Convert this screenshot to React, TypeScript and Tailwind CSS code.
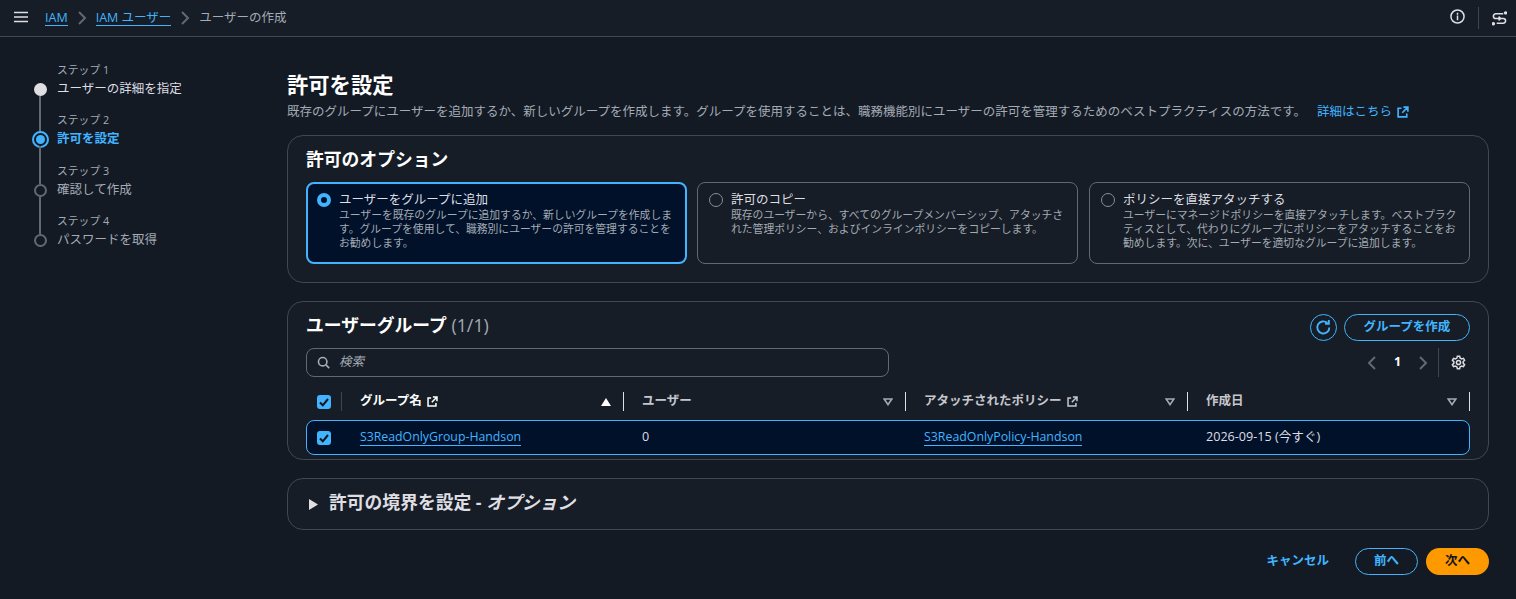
import { useState } from "react";

const font = { fontFamily: '"Open Sans", "Noto Sans CJK JP", sans-serif' };

const steps = [
    { label: "ステップ 1", title: "ユーザーの詳細を指定", state: "done" },
    { label: "ステップ 2", title: "許可を設定", state: "active" },
    { label: "ステップ 3", title: "確認して作成", state: "todo" },
    { label: "ステップ 4", title: "パスワードを取得", state: "todo" },
];

const options = [
    {
        title: "ユーザーをグループに追加",
        desc: "ユーザーを既存のグループに追加するか、新しいグループを作成します。グループを使用して、職務別にユーザーの許可を管理することをお勧めします。",
        selected: true,
    },
    {
        title: "許可のコピー",
        desc: "既存のユーザーから、すべてのグループメンバーシップ、アタッチされた管理ポリシー、およびインラインポリシーをコピーします。",
        selected: false,
    },
    {
        title: "ポリシーを直接アタッチする",
        desc: "ユーザーにマネージドポリシーを直接アタッチします。ベストプラクティスとして、代わりにグループにポリシーをアタッチすることをお勧めします。次に、ユーザーを適切なグループに追加します。",
        selected: false,
    },
];

const Chevron = ({ dir, className }: { dir: "left" | "right"; className: string }) => (
    <svg viewBox="3 1 10 14" className={className} fill="none" stroke="currentColor" strokeWidth="2">
        <path d={dir === "right" ? "M5 2l6 6-6 6" : "M11 2L5 8l6 6"} />
    </svg>
);

const ExternalIcon = ({ className }: { className: string }) => (
    <svg viewBox="0 0 16 16" className={className} fill="none" stroke="currentColor" strokeWidth="2.2">
        <path d="M8.500 1.500h6v6M14.500 1.500L7 9M6 3H1.500v11.500H13V10" />
    </svg>
);

const Check = () => (
    <span className="w-[14px] h-[14px] rounded-[3px] bg-[#42b4ff] flex items-center justify-center">
        <svg viewBox="0 0 14 14" className="w-[14px] h-[14px]" fill="none" stroke="#0f141a" strokeWidth="2">
            <path d="M3 7.500l2.800 2.800L11 4" />
        </svg>
    </span>
);

const SortIcon = ({ active }: { active?: boolean }) =>
    active ? (
        <svg viewBox="0 0 10 8" className="w-[10px] h-[8px] text-white" fill="currentColor">
            <path d="M5 0l5 8H0z" />
        </svg>
    ) : (
        <svg viewBox="0 0 10 8" className="w-[10px] h-[8px] text-[#a4abb5]" fill="none" stroke="currentColor" strokeWidth="1.6">
            <path d="M1.200 1h7.600L5 6.600z" />
        </svg>
    );

const ColDivider = () => <span className="w-px h-[19px] bg-[#dedee3]" />;

const Stepper = () => (
    <div className="w-[287px] shrink-0 pl-[32px] pt-[25px]">
        {steps.map((step, i) => (
            <div key={step.label} className="flex h-[50.3px] gap-[9px]">
                <div className="w-[16px] flex flex-col items-center">
                    <div className={`w-[2px] h-[21px] ${i === 0 ? "" : "bg-[#656871]"}`} />
                    {step.state === "done" && <div className="w-[13px] h-[13px] rounded-full bg-[#dedee3] shrink-0" />}
                    {step.state === "active" && (
                        <div className="w-[17px] h-[17px] -my-[2px] rounded-full border-2 border-[#42b4ff] shrink-0 flex items-center justify-center">
                            <div className="w-[9px] h-[9px] rounded-full bg-[#42b4ff]" />
                        </div>
                    )}
                    {step.state === "todo" && <div className="w-[13px] h-[13px] rounded-full border-2 border-[#656871] shrink-0" />}
                    {i < steps.length - 1 && <div className="w-[2px] flex-1 bg-[#656871]" />}
                </div>
                <div>
                    <p className="text-[10.8px] leading-[15px] text-[#a4abb5]">{step.label}</p>
                    <p
                        className={`text-[12.5px] leading-[20px] mt-[2px] ${
                            step.state === "active"
                                ? "font-bold text-[#42b4ff]"
                                : step.state === "done"
                                  ? "text-[#dedee3]"
                                  : "text-[#a4abb5]"
                        }`}
                    >
                        {step.title}
                    </p>
                </div>
            </div>
        ))}
    </div>
);

export default function App() {
    const [selected] = useState(true);

    return (
        <div className="w-[1516px] h-[599px] overflow-hidden bg-[#131a24] text-[#dedee3]" style={font}>
            <header className="h-[37px] bg-[#161d26] border-b border-[#424650] flex items-center pl-[14px] pr-[9px]">
                <svg viewBox="0 0 14 12" className="w-[14px] h-[12px] mb-[3px] text-[#dedee3]" fill="none" stroke="currentColor" strokeWidth="1.6">
                    <path d="M0 1.500h14M0 6h14M0 10.500h14" />
                </svg>
                <nav className="flex items-center ml-[17px] text-[12.5px]">
                    <a className="text-[#42b4ff] border-b border-[#42b4ff] leading-[15px]">IAM</a>
                    <Chevron dir="right" className="w-[10px] h-[14px] mx-[9px] text-[#656871]" />
                    <a className="text-[#42b4ff] border-b border-[#42b4ff] leading-[15px]">IAM ユーザー</a>
                    <Chevron dir="right" className="w-[10px] h-[14px] mx-[9px] text-[#656871]" />
                    <span className="text-[#a4abb5]">ユーザーの作成</span>
                </nav>
                <div className="ml-auto flex items-center">
                    <svg viewBox="0 0 16 16" className="w-[15px] h-[15px] mb-[3px] text-[#dedee3]" fill="none" stroke="currentColor" strokeWidth="1.6">
                        <circle cx="8" cy="8" r="7" />
                        <path d="M8 7v5M8 4v2" />
                    </svg>
                    <span className="w-px h-[22px] bg-[#424650] mx-[13px]" />
                    <svg viewBox="0 0 16 16" className="w-[15px] h-[15px] mt-[1px] text-[#dedee3]" fill="none" stroke="currentColor" strokeWidth="1.7">
                        <path d="M12 3H4a2.500 2.500 0 0 0 0 5h8a2.500 2.500 0 0 1 0 5H5" />
                        <path d="M7 6l2 2-2 2" />
                        <circle cx="14.500" cy="2" r="1" fill="currentColor" />
                        <circle cx="1.500" cy="13.500" r="1" fill="currentColor" />
                    </svg>
                </div>
            </header>

            <div className="flex">
                <Stepper />

                <main className="w-[1202px] shrink-0">
                    <h1 className="text-[21.3px] leading-[28px] font-bold text-white mt-[34px]">許可を設定</h1>
                    <p className="text-[12.5px] leading-[18px] text-[#a4abb5] mt-[4px] flex items-center">
                        既存のグループにユーザーを追加するか、新しいグループを作成します。グループを使用することは、職務機能別にユーザーの許可を管理するためのベストプラクティスの方法です。
                        <a className="text-[#42b4ff] ml-[11px] flex items-center gap-[5px]">
                            詳細はこちら
                            <ExternalIcon className="w-[12px] h-[12px]" />
                        </a>
                    </p>

                    <section className="mt-[14px] h-[148px] rounded-[16px] border border-[#424650] bg-[#161d26] px-[18px] pt-[11px]">
                        <h2 className="text-[17.8px] leading-[24px] font-bold text-white">許可のオプション</h2>
                        <div className="grid grid-cols-[391px_392px_381px] mt-[11px]">
                            {options.map((opt) => (
                                <div
                                    key={opt.title}
                                    className={`w-[381px] h-[82px] rounded-[8px] flex gap-[8px] ${
                                        opt.selected && selected
                                            ? "border-2 border-[#42b4ff] bg-[#001129] px-[9px] pt-[8px]"
                                            : "border border-[#656871] px-[11px] pt-[9px]"
                                    }`}
                                >
                                    {opt.selected ? (
                                        <span className="w-[14px] h-[14px] mt-[1px] rounded-full border-[4px] border-[#42b4ff] bg-[#001129] shrink-0" />
                                    ) : (
                                        <span className="w-[14px] h-[14px] mt-[1px] rounded-full border border-[#8c8c94] shrink-0" />
                                    )}
                                    <div>
                                        <p className="text-[12.5px] leading-[16px] text-[#dedee3]">{opt.title}</p>
                                        <p className="text-[10.8px] leading-[14px] text-[#a4abb5]">{opt.desc}</p>
                                    </div>
                                </div>
                            ))}
                        </div>
                    </section>

                    <section className="mt-[18px] h-[159px] rounded-[16px] border border-[#424650] bg-[#161d26] px-[18px]">
                        <div className="flex items-center justify-between pt-[11px]">
                            <h2 className="text-[17.8px] leading-[24px] font-bold text-white mb-[4px]">
                                ユーザーグループ <span className="font-normal text-[#a4abb5]">(1/1)</span>
                            </h2>
                            <div className="flex items-center gap-[7px]">
                                <button className="w-[27px] h-[27px] rounded-full border border-[#42b4ff] flex items-center justify-center text-[#42b4ff]">
                                    <svg viewBox="0 0 16 16" className="w-[17px] h-[17px]" fill="none" stroke="currentColor" strokeWidth="1.800">
                                        <path d="M13.500 8a5.700 5.700 0 1 1-2-4.400M13 1v3.500H9.500" />
                                    </svg>
                                </button>
                                <button className="w-[126px] h-[27px] rounded-full border border-[#42b4ff] text-[12.5px] font-bold text-[#42b4ff]">
                                    グループを作成
                                </button>
                            </div>
                        </div>

                        <div className="flex items-center justify-between mt-[7px]">
                            <div className="w-[583px] h-[29px] rounded-[8px] border border-[#656871] bg-[#161d26] flex items-center pl-[10px] gap-[9px]">
                                <svg viewBox="0 0 16 16" className="w-[13px] h-[13px] text-[#a4abb5]" fill="none" stroke="currentColor" strokeWidth="2">
                                    <circle cx="7" cy="7" r="5.200" />
                                    <path d="M11 11l4 4" />
                                </svg>
                                <span className="text-[12.5px] italic text-[#a4abb5]">検索</span>
                            </div>
                            <div className="flex items-center mr-[4px]">
                                <Chevron dir="left" className="w-[10px] h-[14px] text-[#656871]" />
                                <span className="w-[41px] text-center text-[12.5px] font-bold text-white">1</span>
                                <Chevron dir="right" className="w-[10px] h-[14px] text-[#656871]" />
                                <span className="w-px h-[29px] bg-[#424650] ml-[10px]" />
                                <svg viewBox="0 0 16 16" className="w-[15px] h-[15px] ml-[12px] text-[#dedee3]" fill="none" stroke="currentColor" strokeWidth="1.600">
                                    <circle cx="8" cy="8" r="2.200" />
                                    <path d="M6.800 1.200h2.400l.5 2 1.600.9 2-.6 1.200 2.100-1.500 1.400v1.900l1.500 1.400-1.200 2.100-2-.6-1.600.9-.5 2H6.800l-.5-2-1.600-.9-2 .6-1.200-2.100L3 9V7.100L1.500 5.700l1.200-2.100 2 .6 1.600-.9z" />
                                </svg>
                            </div>
                        </div>

                        <div className="grid grid-cols-[36px_repeat(4,282px)] h-[37px] items-center mt-[6px] text-[12.5px] font-bold">
                            <div className="flex items-center justify-between pl-[11px]">
                                <Check />
                                <span className="w-px h-[19px] bg-[#424650]" />
                            </div>
                            {[
                                { name: "グループ名", ext: true, active: true },
                                { name: "ユーザー" },
                                { name: "アタッチされたポリシー", ext: true },
                                { name: "作成日" },
                            ].map((col) => (
                                <div key={col.name} className={`flex items-center pl-[18px] ${col.active ? "text-white" : "text-[#c6c6cd]"}`}>
                                    {col.name}
                                    {col.ext && <ExternalIcon className="w-[11px] h-[11px] ml-[5px]" />}
                                    <span className="ml-auto mr-[12px]">
                                        <SortIcon active={col.active} />
                                    </span>
                                    <ColDivider />
                                </div>
                            ))}
                        </div>

                        <div className="h-[35px] rounded-[8px] border border-[#42b4ff] bg-[#001129] grid grid-cols-[36px_repeat(4,282px)] items-center text-[12.6px] text-[#dedee3]">
                            <div className="pl-[10px]">
                                <Check />
                            </div>
                            <div className="pl-[17px] text-[12.3px]">
                                <a className="text-[#42b4ff] border-b border-[#42b4ff]">S3ReadOnlyGroup-Handson</a>
                            </div>
                            <div className="pl-[17px]">0</div>
                            <div className="pl-[17px] text-[12.35px]">
                                <a className="text-[#42b4ff] border-b border-[#42b4ff]">S3ReadOnlyPolicy-Handson</a>
                            </div>
                            <div className="pl-[17px]">2026-09-15 (今すぐ)</div>
                        </div>
                    </section>

                    <section className="mt-[18px] h-[52px] rounded-[16px] border border-[#424650] bg-[#161d26] flex items-center pl-[21px]">
                        <svg viewBox="0 0 10 12" className="w-[9px] h-[11px] text-[#dedee3]" fill="currentColor">
                            <path d="M0 0l10 6-10 6z" />
                        </svg>
                        <h2 className="ml-[11px] mb-[3px] text-[17.8px] font-bold text-[#dedee3]">
                            許可の境界を設定 - <span className="italic">オプション</span>
                        </h2>
                    </section>

                    <div className="flex items-center justify-end mt-[18px] text-[12.5px] font-bold">
                        <a className="text-[#42b4ff] mr-[26px]">キャンセル</a>
                        <button className="w-[63px] h-[27px] rounded-full border border-[#42b4ff] text-[#42b4ff] mr-[8px]">前へ</button>
                        <button className="w-[63px] h-[27px] rounded-full bg-[#ff9900] text-[#0f141a]">次へ</button>
                    </div>
                </main>
            </div>
        </div>
    );
}
